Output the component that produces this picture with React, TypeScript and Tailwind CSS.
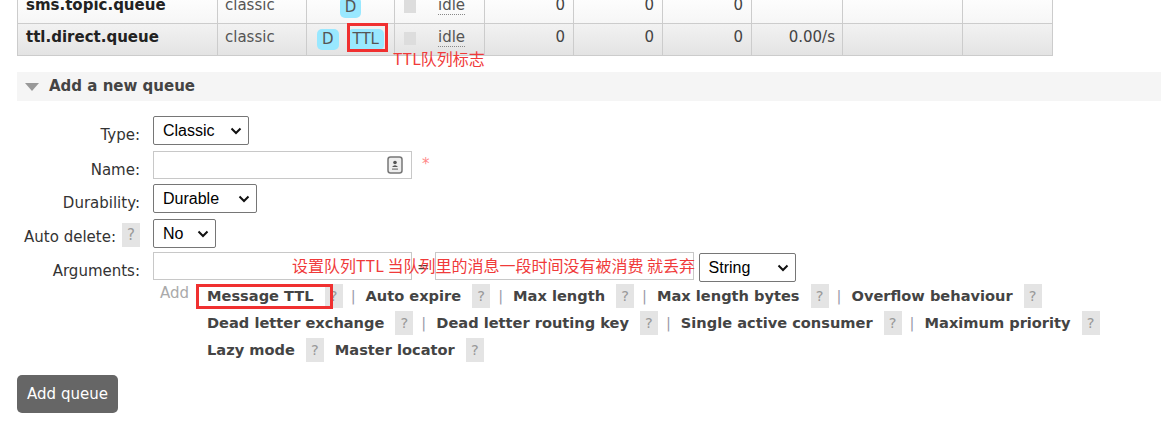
import React from "react";

const font = { fontFamily: '"DejaVu Sans", Verdana, sans-serif' };
const cjk = { fontFamily: '"Noto Sans CJK SC", "DejaVu Sans", sans-serif' };
const sysFont = { fontFamily: '"Liberation Sans", Arial, sans-serif' };

const Badge = ({ children }: { children: React.ReactNode }) => (
  <span className="inline-flex h-[21px] items-center rounded-[5px] bg-[#99e8ff] px-[5px] text-[#555]">
    {children}
  </span>
);

const Idle = () => (
  <div className="flex items-center pl-[9px]">
    <span className="h-[13px] w-[12px] bg-[#dddddd]" />
    <span className="ml-[22px] border-b border-dotted border-[#888] leading-[17px] text-[#555]">
      idle
    </span>
  </div>
);

const Chevron = () => (
  <svg width="12" height="8" viewBox="0 0 12 8">
    <path d="M1.5 1.5 L6 6 L10.5 1.5" fill="none" stroke="#111" strokeWidth="2" />
  </svg>
);

const FakeSelect = ({ value, width }: { value: string; width: string }) => (
  <div
    className={`flex h-[29px] items-center justify-between rounded-[2px] border border-[#767676] bg-white pl-[9px] pr-[6px] text-[16px] text-black ${width}`}
    style={sysFont}
  >
    <span>{value}</span>
    <Chevron />
  </div>
);

const Help = () => (
  <span className="inline-flex h-[24px] w-[18px] items-center justify-center bg-[#e4e4e4] font-normal text-[#999]">
    ?
  </span>
);

const Sep = () => <span className="ml-[8px] mr-[10px] font-normal text-[#99a]">|</span>;

const Arg = ({ label, sep = true }: { label: string; sep?: boolean }) => (
  <>
    <span className="font-bold text-[#444]">{label}</span>
    <span className="ml-[11px]">
      <Help />
    </span>
    {sep ? <Sep /> : <span className="w-[11px]" />}
  </>
);

const Label = ({ children }: { children: React.ReactNode }) => (
  <div className="w-[123px] shrink-0 pt-[8px] text-right text-[#333]">{children}</div>
);

const ContactIcon = () => (
  <svg width="16" height="18" viewBox="0 0 16 18">
    <rect x="1" y="1" width="14" height="16" rx="2.5" fill="#eee" stroke="#777" strokeWidth="1.5" />
    <circle cx="8" cy="6.5" r="1.8" fill="#555" />
    <path d="M5 11 Q8 7.5 11 11 Z" fill="#555" />
    <rect x="5" y="12.5" width="6" height="1.2" fill="#777" />
  </svg>
);

export default function App() {
  const rows = [
    { name: "sms.topic.queue", ttl: false, rate: "", bg: "bg-linear-to-b from-white to-[#f6f6f6]" },
    { name: "ttl.direct.queue", ttl: true, rate: "0.00/s", bg: "bg-linear-to-b from-[#f2f2f2] to-[#e3e3e3]" },
  ];
  return (
    <div className="min-h-[427px] overflow-hidden bg-white text-[15px]" style={font}>
      <div className="relative -mt-[9px] pl-[17px]">
        <table className="w-[1035px] table-fixed border-collapse">
          <colgroup>
            <col className="w-[200px]" />
            <col className="w-[89px]" />
            <col className="w-[88px]" />
            <col className="w-[90px]" />
            <col className="w-[89px]" />
            <col className="w-[89px]" />
            <col className="w-[89px]" />
            <col className="w-[91px]" />
            <col className="w-[120px]" />
            <col className="w-[90px]" />
          </colgroup>
          <tbody>
            {rows.map((r) => (
              <tr key={r.name} className={r.bg}>
                <td className="h-[32px] border border-[#cccccc] pb-[5px] pl-[8px] font-bold text-[#222]">{r.name}</td>
                <td className="border border-[#cccccc] pb-[5px] pl-[7px] text-[#555]">classic</td>
                <td className="border border-[#cccccc] pb-[1px]">
                  <div className="flex justify-center gap-[9px]">
                    <Badge>D</Badge>
                    {r.ttl && <Badge>TTL</Badge>}
                  </div>
                </td>
                <td className="border border-[#cccccc] pb-[3px]">
                  <Idle />
                </td>
                <td className="border border-[#cccccc] pb-[5px] pr-[8px] text-right text-[#444]">0</td>
                <td className="border border-[#cccccc] pb-[5px] pr-[8px] text-right text-[#444]">0</td>
                <td className="border border-[#cccccc] pb-[5px] pr-[8px] text-right text-[#444]">0</td>
                <td className="border border-[#cccccc] pb-[5px] pr-[7px] text-right text-[#444]">{r.rate}</td>
                <td className="border border-[#cccccc]" />
                <td className="border border-[#cccccc]" />
              </tr>
            ))}
          </tbody>
        </table>
        {/* annotation */}
        <div className="absolute left-[347px] top-[32px] h-[29px] w-[41px] border-[3px] border-[#f03030]" />
        <div className="absolute left-[393px] top-[56px] text-[16px] leading-[22px] text-[#f03a3a]" style={cjk}>
          TTL队列标志
        </div>
      </div>

      <div className="ml-[17px] mt-[16px] flex h-[29px] items-center bg-[#f5f5f5]">
        <svg className="ml-[8px]" width="14" height="8" viewBox="0 0 14 8">
          <polygon points="0,0 14,0 7,8" fill="#999" />
        </svg>
        <span className="ml-[10px] font-bold text-[#444]">Add a new queue</span>
      </div>

      <div className="relative pl-[17px] pt-[15px]">
        <div className="flex h-[35px] items-start">
          <Label>Type:</Label>
          <div className="ml-[13px]">
            <FakeSelect value="Classic" width="w-[96px]" />
          </div>
        </div>
        <div className="flex h-[33px] items-start">
          <Label>Name:</Label>
          <div className="ml-[13px] flex items-start">
            <div className="flex h-[28px] w-[259px] items-center justify-end border border-[#c8c8c8] pr-[8px]">
              <ContactIcon />
            </div>
            <span className="ml-[10px] mt-[2px] text-[#f88]">*</span>
          </div>
        </div>
        <div className="flex h-[35px] items-start">
          <Label>Durability:</Label>
          <div className="ml-[13px]">
            <FakeSelect value="Durable" width="w-[104px]" />
          </div>
        </div>
        <div className="flex h-[33px] items-start">
          <div className="flex w-[123px] shrink-0 items-start justify-end text-[#333]">
            <span className="pt-[7px]">Auto delete:</span>
            <span className="ml-[6px] mt-[4px]">
              <Help />
            </span>
          </div>
          <div className="ml-[13px]">
            <FakeSelect value="No" width="w-[63px]" />
          </div>
        </div>
        <div className="flex h-[30px] items-start">
          <Label>Arguments:</Label>
          <div className="ml-[13px] flex items-start">
            <div className="h-[28px] w-[259px] border border-[#c8c8c8]" />
            <span className="mx-[5px] pt-[4px] text-[#444]">=</span>
            <div className="h-[28px] w-[259px] border border-[#c8c8c8]" />
            <div className="ml-[5px] mt-[1px]">
              <FakeSelect value="String" width="w-[97px]" />
            </div>
          </div>
        </div>
        <div className="flex items-start">
          <div className="w-[190px] shrink-0 pl-[143px] text-[#aaa]">Add</div>
          <div className="flex flex-col text-[14.6px]">
            <div className="flex h-[27px] items-center">
              <Arg label="Message TTL" />
              <Arg label="Auto expire" />
              <Arg label="Max length" />
              <Arg label="Max length bytes" />
              <Arg label="Overflow behaviour" sep={false} />
            </div>
            <div className="flex h-[27px] items-center">
              <Arg label="Dead letter exchange" />
              <Arg label="Dead letter routing key" />
              <Arg label="Single active consumer" />
              <Arg label="Maximum priority" sep={false} />
            </div>
            <div className="flex h-[27px] items-center">
              <Arg label="Lazy mode" sep={false} />
              <Arg label="Master locator" sep={false} />
            </div>
          </div>
        </div>

        {/* annotations */}
        <div className="absolute left-[196px] top-[183px] h-[25px] w-[137px] border-[3px] border-[#f03030]" />
        <div
          className="absolute left-[292px] top-[153px] whitespace-nowrap text-[16px] leading-[22px] text-[#f03a3a]"
          style={cjk}
        >
          设置队列TTL 当队列里的消息一段时间没有被消费 就丢弃
        </div>

        <button className="mt-[12px] flex h-[38px] w-[101px] items-center justify-center rounded-[5px] bg-[#666] text-white">
          Add queue
        </button>
      </div>
    </div>
  );
}
